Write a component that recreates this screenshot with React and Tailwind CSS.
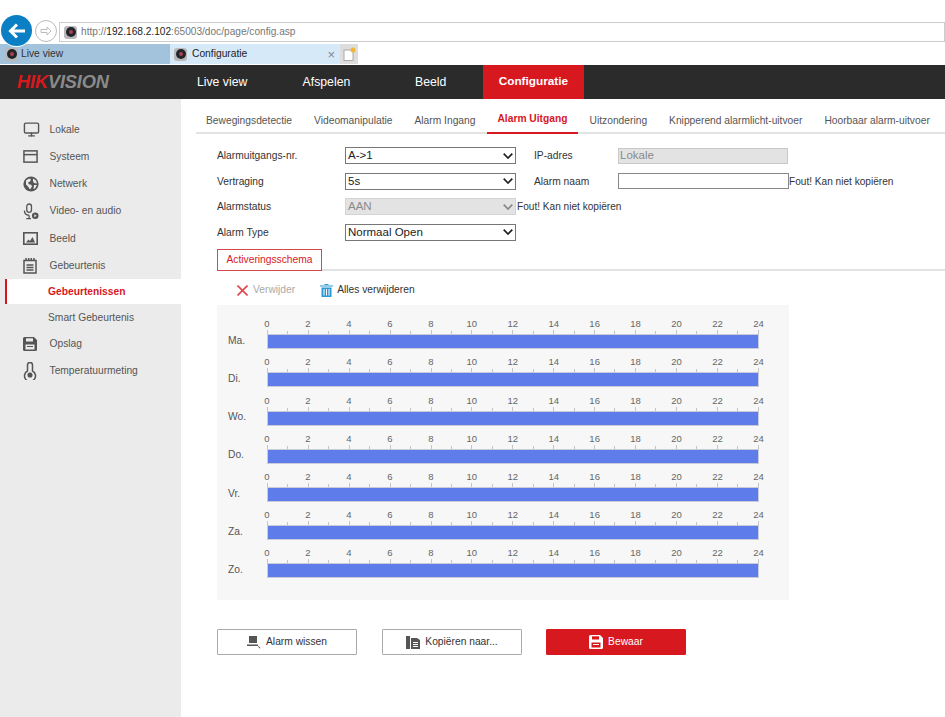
import { Monitor } from "lucide-react";

const FONT = "font-['Liberation_Sans',Arial,sans-serif]";

const sideItems = [
    { label: "Lokale", icon: <Monitor size={17} strokeWidth={2} color="#555" /> },
    { label: "Systeem", icon: <WindowIcon /> },
    { label: "Netwerk", icon: <GlobeIcon /> },
    { label: "Video- en audio", icon: <MicIcon /> },
    { label: "Beeld", icon: <PictureIcon /> },
    { label: "Gebeurtenis", icon: <EventIcon /> },
];

const tabs = [
    { label: "Bewegingsdetectie" },
    { label: "Videomanipulatie" },
    { label: "Alarm Ingang" },
    { label: "Alarm Uitgang", active: true },
    { label: "Uitzondering" },
    { label: "Knipperend alarmlicht-uitvoer" },
    { label: "Hoorbaar alarm-uitvoer" },
];

const days = ["Ma.", "Di.", "Wo.", "Do.", "Vr.", "Za.", "Zo."];
const hours = [0, 2, 4, 6, 8, 10, 12, 14, 16, 18, 20, 22, 24];
const ticks = Array.from({ length: 25 }, (_, i) => i);

function WindowIcon() {
    return (
        <svg width="15" height="15" viewBox="0 0 16 16" fill="none" stroke="#555" strokeWidth="1.6">
            <rect x="1" y="2" width="14" height="12" />
            <path d="M1 6h14" />
        </svg>
    );
}

function GlobeIcon() {
    return (
        <svg width="16" height="16" viewBox="0 0 16 16">
            <circle cx="8" cy="8" r="7.6" fill="#555" />
            <path d="M3 4.5l3-2 2 1-1 2-2 1 1 2 2 0 1 2-2 3-2-3-2-2zM10 2.5l3 2 1 3-3-.5-1-2zM11 9h3l-2 3.5-1.5.5z" fill="#ebebeb" />
        </svg>
    );
}

function MicIcon() {
    return (
        <svg width="16" height="17" viewBox="0 0 17 18" fill="none" stroke="#555" strokeWidth="1.4">
            <rect x="4" y="1" width="5" height="9" rx="2.5" />
            <path d="M1.5 8c0 3 2 5 5 5M6.5 13v3M3.5 16.5h5" />
            <circle cx="13" cy="13.5" r="3.5" fill="#555" stroke="none" />
            <path d="M12 12l2.5 1.5L12 15z" fill="#ebebeb" stroke="none" />
        </svg>
    );
}

function PictureIcon() {
    return (
        <svg width="15" height="13" viewBox="0 0 15 13" fill="none">
            <rect x="0.8" y="0.8" width="13.4" height="11.4" stroke="#555" strokeWidth="1.6" />
            <path d="M3 10.5l2.5-3 1.5 1.5 2.5-4 2.5 5.5z" fill="#555" />
        </svg>
    );
}

function EventIcon() {
    return (
        <svg width="14" height="16" viewBox="0 0 14 16" fill="none" stroke="#555" strokeWidth="1.5">
            <rect x="1" y="2.5" width="12" height="12.5" />
            <path d="M3 0v3M5.7 0v3M8.3 0v3M11 0v3M3.5 7h7M3.5 9.5h7M3.5 12h7" />
        </svg>
    );
}

function FloppyIcon({ color = "#555", hole = "#ebebeb" }) {
    return (
        <svg width="14" height="14" viewBox="0 0 14 14">
            <path d="M0 1.5A1.5 1.5 0 0 1 1.5 0H11l3 3v9.5a1.5 1.5 0 0 1-1.5 1.5H1.5A1.5 1.5 0 0 1 0 12.5z" fill={color} />
            <rect x="3" y="1.3" width="7" height="3.2" fill={hole} />
            <rect x="2.5" y="7.5" width="9" height="5" fill={hole} />
            <rect x="4" y="9" width="6" height="1" fill={color} />
        </svg>
    );
}

function ThermoIcon() {
    return (
        <svg width="14" height="18" viewBox="0 0 14 18" fill="none" stroke="#555" strokeWidth="1.5">
            <path d="M4.5 9V3a2.5 2.5 0 0 1 5 0v6a5.5 5.5 0 1 1-5 0z" />
            <circle cx="7" cy="13" r="1.8" fill="#555" />
        </svg>
    );
}

function CamIcon() {
    return (
        <span className="flex h-[13px] w-[13px] items-center justify-center rounded-[3px] bg-[#b9b9b9]">
            <span className="flex h-[10px] w-[10px] items-center justify-center rounded-full bg-[#22262c]">
                <span className="h-[4px] w-[4px] rounded-full bg-[#a8434f]" />
            </span>
        </span>
    );
}

function Chevron({ color = "#222" }) {
    return (
        <svg width="10" height="6" viewBox="0 0 10 6" fill="none" stroke={color} strokeWidth="1.7">
            <path d="M0.7 0.7L5 5l4.3-4.3" />
        </svg>
    );
}

function Select({ value, disabled }) {
    return (
        <div className={`flex h-[17px] w-[171px] items-center justify-between border pl-[2px] pr-[2px] text-[11.5px] ${disabled ? "border-[#d4d4d4] bg-[#e3e3e3] text-[#8a8a8a]" : "border-[#777] bg-white text-[#222]"}`}>
            <span>{value}</span>
            <Chevron color={disabled ? "#888" : "#222"} />
        </div>
    );
}

function FormRow({ children }) {
    return <div className="flex h-[25.5px] items-center">{children}</div>;
}

function Label({ children, className = "w-[128px]" }) {
    return <span className={`${className} text-[10.25px] text-[#333]`}>{children}</span>;
}

function DayRow({ day }) {
    return (
        <div className="flex h-[38.2px] items-end">
            <span className="mb-[1px] w-[50px] pl-[11px] text-[10.25px] text-[#555]">{day}</span>
            <div className="w-[491.5px]">
                <div className="flex justify-between">
                    {hours.map((h) => (
                        <span key={h} className="flex w-0 justify-center text-[9.5px] leading-[12px] text-[#666]">{h}</span>
                    ))}
                </div>
                <div className="flex h-[4px] items-end justify-between">
                    {ticks.map((t) => (
                        <span key={t} className={`w-px bg-[#c4c4c4] ${t % 2 === 0 ? "h-[4px]" : "h-[3px]"}`} />
                    ))}
                </div>
                <div className="h-[15px] border border-[#c9cbd6] bg-[#5f7ceb]" />
            </div>
        </div>
    );
}

function ActionButton({ icon, label, red }) {
    return (
        <button className={`flex h-[26px] w-[140px] items-center justify-center gap-[5px] rounded-[1px] border text-[10.25px] ${red ? "border-[#d7181f] bg-[#d7181f] text-white" : "border-[#aaa] bg-white text-[#333]"}`}>
            {icon}
            <span>{label}</span>
        </button>
    );
}

function SideIcon({ children }) {
    return <span className="flex w-[49.5px] shrink-0 pl-[23px]">{children}</span>;
}

export default function App() {
    return (
        <div className={`${FONT} flex h-[717px] w-[945px] flex-col overflow-hidden bg-white`}>
            {/* browser bar */}
            <div className="flex h-[44px] pl-[1px] pt-[15px]">
                <div className="z-10 flex h-[31px] w-[31px] shrink-0 items-center justify-center rounded-full bg-[#0a7fc4] ring-1 ring-white">
                    <svg width="18" height="16" viewBox="0 0 18 16" fill="none" stroke="white" strokeWidth="3">
                        <path d="M17 8H3M9 1.5L2.5 8 9 14.5" />
                    </svg>
                </div>
                <div className="ml-[3px] mt-[5px] flex h-[22px] w-[22px] shrink-0 items-center justify-center rounded-full border border-[#bbb]">
                    <svg width="12" height="10" viewBox="0 0 12 10" fill="none" stroke="#bbb" strokeWidth="1">
                        <path d="M1 3.5h6V1l4 4-4 4V6.5H1z" />
                    </svg>
                </div>
                <div className="ml-[2px] mt-[7px] flex h-[20px] flex-1 items-center border border-[#ccc] pl-[4px]">
                    <CamIcon />
                    <span className="ml-[4px] text-[10.15px] text-[#777]">http://<span className="text-[#222]">192.168.2.102</span>:65003/doc/page/config.asp</span>
                </div>
            </div>
            {/* browser tabs */}
            <div className="flex h-[21px] items-start">
                <div className="flex h-[20px] w-[170px] items-center gap-[3px] bg-[#a3c2dc] pl-[5px] text-[10.25px] text-[#333]">
                    <CamIcon />
                    <span>Live view</span>
                </div>
                <div className="flex h-[20px] w-[170px] items-center gap-[3px] bg-[#d6e9f9] pl-[4px] pr-[5px] text-[10.25px] text-[#222]">
                    <CamIcon />
                    <span className="ml-[2px] flex-1">Configuratie</span>
                    <span className="text-[13px] leading-none text-[#888]">×</span>
                </div>
                <div className="flex h-[20px] w-[18px] items-center justify-center bg-[#ddd]">
                    <svg width="13" height="14" viewBox="0 0 13 14">
                        <rect x="1" y="3" width="9" height="10.5" fill="white" stroke="#aaa" />
                        <circle cx="10" cy="3" r="2.5" fill="#f2b632" />
                    </svg>
                </div>
            </div>
            {/* app header */}
            <div className="flex h-[34px] shrink-0 items-stretch bg-[#2b2b2b]">
                <div className="flex w-[170px] items-center pl-[17px] text-[18.3px] font-bold italic tracking-[-0.2px]">
                    <span className="text-[#d7181f]">HIK</span>
                    <span className="text-[#8a8a8a]">VISION</span>
                </div>
                {["Live view", "Afspelen", "Beeld"].map((item) => (
                    <div key={item} className="flex w-[104.3px] items-center justify-center text-[12.25px] text-white">{item}</div>
                ))}
                <div className="flex w-[101px] items-center justify-center bg-[#d7181f] text-[11.8px] font-bold text-white">Configuratie</div>
            </div>
            <div className="flex min-h-0 flex-1">
                {/* sidebar */}
                <aside className="w-[181px] shrink-0 bg-[#ebebeb] pt-[17px] text-[10.25px] text-[#555]">
                    {sideItems.map((item) => (
                        <div key={item.label} className="flex h-[27.2px] items-center">
                            <SideIcon>{item.icon}</SideIcon>
                            <span>{item.label}</span>
                        </div>
                    ))}
                    <div className="ml-[5px] flex h-[25px] items-center border-l-2 border-[#d7181f] bg-white pl-[41px] font-bold text-[#d7181f]">Gebeurtenissen</div>
                    <div className="flex h-[27px] items-center pl-[48px]">Smart Gebeurtenis</div>
                    <div className="flex h-[26px] items-center">
                        <SideIcon><FloppyIcon /></SideIcon>
                        <span>Opslag</span>
                    </div>
                    <div className="flex h-[27px] items-center">
                        <SideIcon><ThermoIcon /></SideIcon>
                        <span>Temperatuurmeting</span>
                    </div>
                </aside>
                {/* main */}
                <main className="flex-1 pl-[15px]">
                    <div className="flex h-[35px] items-stretch gap-[2px] border-b-2 border-[#e3e3e3] text-[10.25px] text-[#555]">
                        {tabs.map((tab) => (
                            <div key={tab.label} className={`-mb-[2px] flex items-center whitespace-nowrap px-[10px] ${tab.active ? "border-b-2 border-[#d7181f] pb-[5px] pt-[11px] font-bold text-[#d7181f]" : "pt-[9px]"}`}>{tab.label}</div>
                        ))}
                    </div>
                    <div className="pl-[21px]">
                        <div className="pt-[9px]">
                            <FormRow>
                                <Label>Alarmuitgangs-nr.</Label>
                                <Select value="A->1" />
                                <Label className="ml-[18px] w-[84px]">IP-adres</Label>
                                <div className="flex h-[16px] w-[170px] items-center border border-[#c8c8c8] bg-[#e3e3e3] pl-[1px] text-[11.5px] text-[#8a8a8a]">Lokale</div>
                            </FormRow>
                            <FormRow>
                                <Label>Vertraging</Label>
                                <Select value="5s" />
                                <Label className="ml-[18px] w-[84px]">Alarm naam</Label>
                                <div className="h-[16px] w-[171px] border border-[#888] bg-white" />
                                <span className="text-[10.1px] text-[#333]">Fout! Kan niet kopiëren</span>
                            </FormRow>
                            <FormRow>
                                <Label>Alarmstatus</Label>
                                <Select value="AAN" disabled />
                                <span className="ml-px text-[10.1px] text-[#333]">Fout! Kan niet kopiëren</span>
                            </FormRow>
                            <FormRow>
                                <Label>Alarm Type</Label>
                                <Select value="Normaal Open" />
                            </FormRow>
                        </div>
                        <div className="mt-[4px] h-[22px] border-b-2 border-[#e3e3e3]">
                            <div className="flex h-[22px] w-[105px] items-center justify-center border border-[#d7484d] bg-white text-[10.25px] text-[#d7181f]">Activeringsschema</div>
                        </div>
                        <div className="flex h-[34px] items-center pl-[20px] pt-[4px] text-[10.25px]">
                            <svg width="11" height="11" viewBox="0 0 11 11" stroke="#e0474c" strokeWidth="1.6"><path d="M0.5 0.5l10 10M10.5 0.5l-10 10" /></svg>
                            <span className="ml-[5px] text-[#aaa]">Verwijder</span>
                            <svg className="ml-[25px]" width="13" height="13" viewBox="0 0 13 13" fill="#2a9ad6"><path d="M0 1.5h13v1H0zM4.5 0h4v1h-4zM1.5 3.5h10V13h-10zM3.5 5v6.5h1V5zM6 5v6.5h1V5zM8.5 5v6.5h1V5z" fillRule="evenodd" /></svg>
                            <span className="ml-[4px] text-[#333]">Alles verwijderen</span>
                        </div>
                        {/* schedule */}
                        <div className="h-[295px] w-[572px] bg-[#f7f7f7] pt-[6px]">
                            {days.map((day) => <DayRow key={day} day={day} />)}
                        </div>
                        <div className="mt-[29px] flex">
                            <ActionButton label="Alarm wissen" icon={
                                <svg width="14" height="13" viewBox="0 0 14 13" fill="#555"><path d="M2 0h8v7H2zM0 8.5h11v1.5H0zM11.5 10l2 2-1 .5-1.5-2z" /></svg>
                            } />
                            <div className="ml-[25px]">
                                <ActionButton label="Kopiëren naar..." icon={
                                    <svg width="14" height="13" viewBox="0 0 14 13" fill="#555"><path d="M0 0h4v13H0zM5 2h6l3 2v9H5zM7 6v1h5V6zM7 8v1h5V8zM7 10v1h5v-1z" fillRule="evenodd" /></svg>
                                } />
                            </div>
                            <div className="ml-[24px]">
                                <ActionButton red label="Bewaar" icon={<FloppyIcon color="#fff" hole="#d7181f" />} />
                            </div>
                        </div>
                    </div>
                </main>
            </div>
        </div>
    );
}
